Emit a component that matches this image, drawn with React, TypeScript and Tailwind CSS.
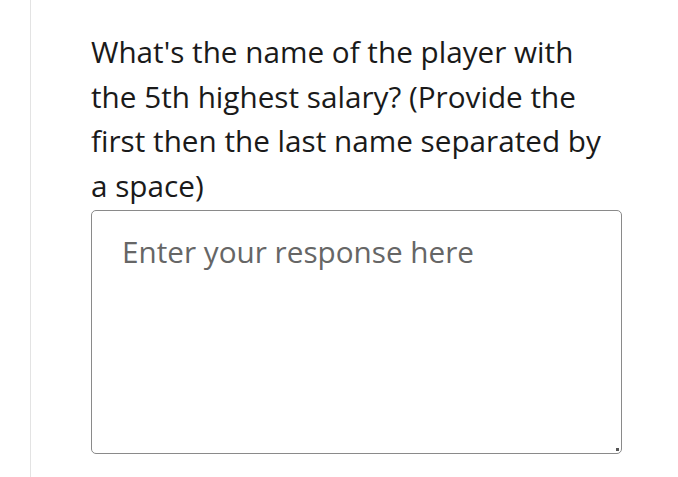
export default function App() {
  return (
    <div className="flex h-[477px] w-[678px] bg-white font-['Open_Sans',sans-serif]">
      <div className="ml-[30px] w-px shrink-0 bg-[#e3e3e3]" />
      <div className="flex flex-col pl-[60px] pt-[30px]">
        <p className="w-[531px] text-[29.7px] leading-[44.7px] text-[#1a1a1a]">
          What's the name of the player with the 5th highest salary? (Provide the first then the last name separated by a space)
        </p>
        <div className="relative mt-[1px]">
          <textarea
            placeholder="Enter your response here"
            className="block h-[244px] w-[531px] resize-none rounded-[5px] border border-[#8a8a8a] px-[30px] pt-[19px] pb-[18px] text-[29.7px] leading-[44.7px] text-[#1a1a1a] outline-none placeholder:text-[#666666]"
          />
          <span className="absolute bottom-[3px] right-[3px] h-[3px] w-[3px] bg-[#555]" />
        </div>
      </div>
    </div>
  );
}
